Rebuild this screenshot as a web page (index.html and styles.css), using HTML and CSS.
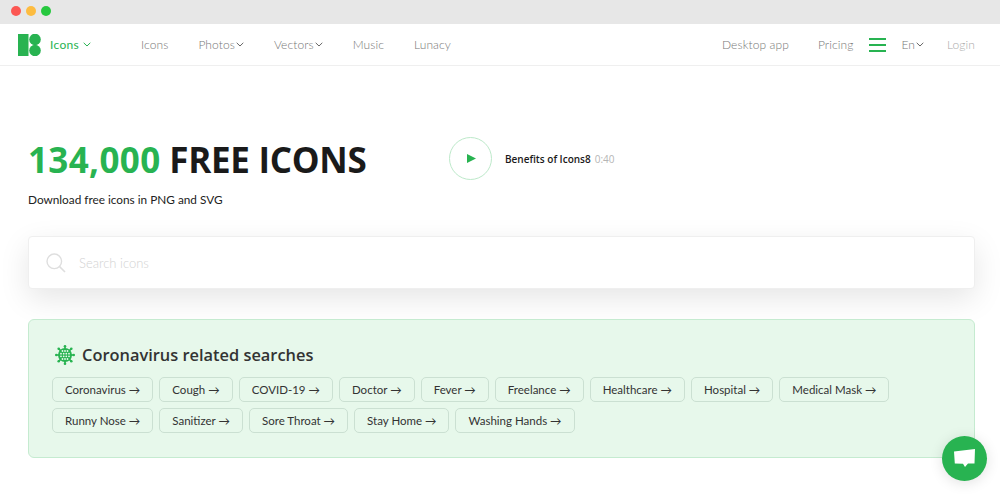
FILE: index.html
```html
<!DOCTYPE html>
<html lang="en">
<head>
<meta charset="utf-8">
<title>Icons8</title>
<link rel="stylesheet" href="styles.css">
</head>
<body>
<div class="chrome">
  <span class="dot dot-red"></span><span class="dot dot-yellow"></span><span class="dot dot-green"></span>
</div>
<header class="nav">
  <div class="brand">
    <svg class="logo" width="23" height="22" viewBox="0 0 23 22"><rect x="0" y="0" width="10.500" height="22" fill="#28b351"/><circle cx="17" cy="5.500" r="5.800" fill="#28b351"/><circle cx="17" cy="16.500" r="5.800" fill="#28b351"/></svg>
    <span class="brand-name">Icons</span>
    <svg class="caret" width="8" height="5" viewBox="0 0 8 5"><path d="M.7.8 4 4 7.3.8" fill="none" stroke="#28b351" stroke-width="1"/></svg>
  </div>
  <nav class="links">
    <a class="link">Icons</a>
    <a class="link">Photos<svg class="caret" width="8" height="5" viewBox="0 0 8 5"><path d="M.7.8 4 4 7.3.8" fill="none" stroke="#666" stroke-width="1"/></svg></a>
    <a class="link">Vectors<svg class="caret" width="8" height="5" viewBox="0 0 8 5"><path d="M.7.8 4 4 7.3.8" fill="none" stroke="#666" stroke-width="1"/></svg></a>
    <a class="link">Music</a>
    <a class="link">Lunacy</a>
  </nav>
  <div class="nav-right">
    <a class="link">Desktop app</a>
    <a class="link pricing">Pricing</a>
    <span class="burger"><i></i><i></i><i></i></span>
    <a class="link lang">En<svg class="caret" width="8" height="5" viewBox="0 0 8 5"><path d="M.7.8 4 4 7.3.8" fill="none" stroke="#666" stroke-width="1"/></svg></a>
    <a class="link login">Login</a>
  </div>
</header>
<main class="main">
  <section class="hero">
    <div class="hero-text">
      <h1 class="title"><span class="count">134,000</span> FREE ICONS</h1>
      <p class="sub">Download free icons in PNG and SVG</p>
    </div>
    <div class="video">
      <span class="play"><svg width="9" height="9" viewBox="0 0 9 9"><path d="M0 0 9 4.5 0 9Z" fill="#28b351"/></svg></span>
      <span class="video-title">Benefits of Icons8</span>
      <span class="video-time">0:40</span>
    </div>
  </section>
  <div class="search">
    <svg width="20" height="20" viewBox="0 0 20 20"><circle cx="8.3" cy="8.3" r="7.3" fill="none" stroke="#dedede" stroke-width="1.4"/><path d="M13.6 13.6 19 19" stroke="#dedede" stroke-width="1.6"/></svg>
    <span class="placeholder">Search icons</span>
  </div>
  <section class="panel">
    <h2 class="panel-title">
      <svg width="20" height="20" viewBox="0 0 20 20"><g stroke="#28b351" stroke-width="1.6" fill="none"><path d="M10 1v4M10 15v4M1 10h4M15 10h4M3.6 3.600l3 3M13.400 13.400l3 3M16.400 3.600l-3 3M6.600 13.400l-3 3"/></g><g fill="#28b351"><circle cx="10" cy="10" r="7"/><circle cx="10" cy="1.300" r="1.300"/><circle cx="10" cy="18.700" r="1.300"/><circle cx="1.300" cy="10" r="1.300"/><circle cx="18.700" cy="10" r="1.300"/><circle cx="3.700" cy="3.700" r="1.300"/><circle cx="16.300" cy="3.700" r="1.300"/><circle cx="3.700" cy="16.300" r="1.300"/><circle cx="16.300" cy="16.300" r="1.300"/></g><g fill="#e7f8eb"><circle cx="7.500" cy="6" r=".9"/><circle cx="10" cy="6" r=".9"/><circle cx="12.500" cy="6" r=".9"/><circle cx="6" cy="8.700" r=".9"/><circle cx="8.700" cy="8.700" r=".9"/><circle cx="11.300" cy="8.700" r=".9"/><circle cx="14" cy="8.700" r=".9"/><circle cx="6" cy="11.300" r=".9"/><circle cx="8.700" cy="11.300" r=".9"/><circle cx="11.300" cy="11.300" r=".9"/><circle cx="14" cy="11.300" r=".9"/><circle cx="7.500" cy="14" r=".9"/><circle cx="10" cy="14" r=".9"/><circle cx="12.500" cy="14" r=".9"/></g></svg>
      Coronavirus related searches
    </h2>
    <div class="chips">
      <a class="chip">Coronavirus →</a>
      <a class="chip">Cough →</a>
      <a class="chip">COVID-19 →</a>
      <a class="chip">Doctor →</a>
      <a class="chip">Fever →</a>
      <a class="chip">Freelance →</a>
      <a class="chip">Healthcare →</a>
      <a class="chip">Hospital →</a>
      <a class="chip">Medical Mask →</a>
    </div>
    <div class="chips">
      <a class="chip">Runny Nose →</a>
      <a class="chip">Sanitizer →</a>
      <a class="chip">Sore Throat →</a>
      <a class="chip">Stay Home →</a>
      <a class="chip">Washing Hands →</a>
    </div>
  </section>
</main>
<button class="chat" aria-label="Chat">
  <svg width="22" height="20" viewBox="0 0 22 20"><path d="M0 2.5 21 0 20.500 14.500H14L11 18 9 14.800 .8 14.500Z" fill="#fff"/></svg>
</button>
</body>
</html>
```
FILE: styles.css
```css
* { box-sizing: border-box; }
html, body { margin: 0; height: 495px; overflow: hidden; background: #fff; }
body { font-family: "Open Sans", "Noto Sans", sans-serif; color: #1a1a1a; position: relative; }

.chrome { height: 24px; background: #e7e7e7; display: flex; align-items: center; gap: 5px; padding: 0 0 2px 11px; }
.dot { width: 10px; height: 10px; border-radius: 50%; }
.dot-red { background: #fc5753; }
.dot-yellow { background: #fdbc40; }
.dot-green { background: #27c83f; }

.nav { height: 42px; border-bottom: 1px solid #efefef; display: flex; align-items: center; padding: 0 25px 0 18px; font-family: Lato, sans-serif; font-size: 12px; }
.brand { display: flex; align-items: center; width: 123px; flex: none; color: #28b351; letter-spacing: .3px; }
.logo { flex: none; margin-right: 9px; }
.brand .caret { margin-left: 4px; }
.links { display: flex; gap: 30px; }
.link { color: #777; white-space: nowrap; display: inline-flex; align-items: center; letter-spacing: .1px; font-weight: 300; }
.link .caret { margin-left: 1px; }
.nav-right { margin-left: auto; display: flex; align-items: center; }
.pricing { margin-left: 29px; }
.burger { width: 17px; margin: 0 15px 0 16px; display: flex; flex-direction: column; gap: 4px; }
.burger i { display: block; height: 2px; background: #28b351; }
.lang { margin-right: 23px; }
.login { color: #aaa; }

.main { padding: 0 25px 0 28px; }
.hero { display: flex; align-items: flex-start; padding-top: 71px; height: 170px; }
.hero-text { width: 421px; flex: none; }
.title { margin: 0; font-size: 35px; line-height: 46px; font-weight: 700; color: #1a1a1a; white-space: nowrap; letter-spacing: -.3px; }
.count { color: #28b351; letter-spacing: .35px; }
.sub { margin: 8px 0 0; font-family: Lato, sans-serif; font-size: 11.8px; line-height: 18px; color: #222; }
.video { display: flex; align-items: center; font-size: 10px; }
.play { width: 43px; height: 43px; border: 1.5px solid #bde9ca; border-radius: 50%; display: flex; align-items: center; justify-content: center; margin-right: 13px; padding-left: 1px; flex: none; }
.play svg { display: block; }
.video-title { color: #1a1a1a; font-weight: 600; }
.video-time { color: #b5b5b5; margin-left: 4px; }

.search { height: 53px; border: 1px solid #efefef; border-radius: 4px; background: #fff; box-shadow: 0 10px 30px rgba(0, 0, 0, .1); display: flex; align-items: center; padding-left: 17px; gap: 13px; }
.placeholder { font-family: Lato, sans-serif; font-size: 13px; color: #d2d2d2; font-weight: 300; }

.panel { margin-top: 30px; height: 139px; background: #e7f8eb; border: 1px solid #c5ebd0; border-radius: 6px; padding: 25px 23px 0; }
.panel-title { margin: 0 0 12px 3px; font-size: 16.4px; line-height: 20px; font-weight: 600; color: #333; display: flex; align-items: center; gap: 7px; }
.chips { display: flex; gap: 6px; margin-bottom: 6px; }
.chip { height: 25px; line-height: 24px; padding: 0 12px; border: 1px solid #cbe0d2; border-radius: 5px; font-family: Lato, sans-serif; font-size: 11.5px; color: #333; white-space: nowrap; }

.chat { position: absolute; left: 942px; top: 436px; width: 45px; height: 45px; border: 0; padding: 0 0 0 1px; border-radius: 50%; background: #28b351; box-shadow: 0 2px 14px rgba(0, 0, 0, .12); display: flex; align-items: center; justify-content: center; }
```
